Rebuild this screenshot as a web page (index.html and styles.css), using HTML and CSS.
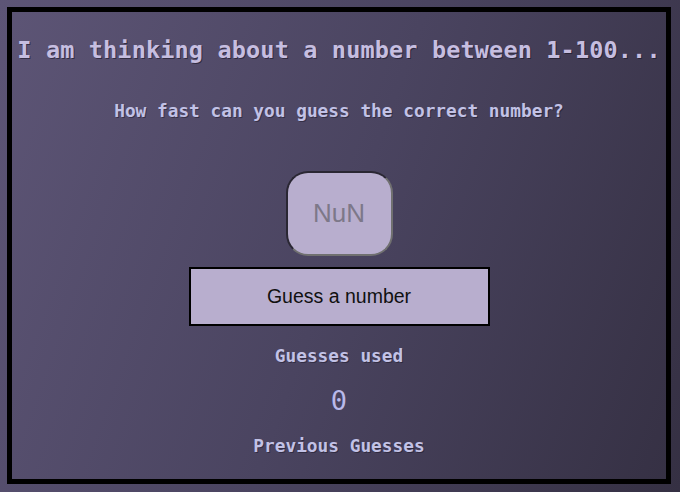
FILE: index.html
```html
<!DOCTYPE html>
<html lang="en">
<head>
<meta charset="utf-8">
<title>Guess the number</title>
<link rel="stylesheet" href="styles.css">
</head>
<body>
  <main class="game">
    <h1 class="title">I am thinking about a number between 1-100...</h1>
    <p class="subtitle">How fast can you guess the correct number?</p>
    <div class="display">NuN</div>
    <button class="guess-btn" type="button">Guess a number</button>
    <p class="label">Guesses used</p>
    <p class="count">0</p>
    <p class="label label-prev">Previous Guesses</p>
  </main>
</body>
</html>
```
FILE: styles.css
```css
html {
  height: 100%;
}
body {
  margin: 0;
  padding: 7px;
  height: 100%;
  box-sizing: border-box;
  background: linear-gradient(110deg, #5d5576 0%, #4a4460 50%, #353043 100%);
  font-family: "DejaVu Sans Mono", "Liberation Mono", monospace;
  color: #c5bde0;
}
.game {
  box-sizing: border-box;
  width: 664px;
  height: 477px;
  border: 5px solid #000;
  display: flex;
  flex-direction: column;
  align-items: center;
  padding-top: 24px;
}
.title {
  margin: 0;
  font-size: 23.5px;
  line-height: 28px;
  letter-spacing: 0.15px;
  font-weight: bold;
  white-space: nowrap;
  color: #c6bee0;
  text-shadow: 1px 1px 0 rgba(20, 16, 30, 0.55);
}
.subtitle {
  margin: 36px 0 0;
  font-size: 17.8px;
  line-height: 22px;
  font-weight: bold;
  color: #c2c2e6;
  text-shadow: 1px 1px 0 rgba(20, 16, 30, 0.45);
}
.display {
  box-sizing: border-box;
  margin-top: 49px;
  width: 107px;
  height: 85px;
  border: 2px solid;
  border-color: #2a2733 #707070 #707070 #2a2733;
  border-radius: 22px;
  background: #b8aece;
  display: flex;
  align-items: center;
  justify-content: center;
  font-family: "Liberation Sans", Arial, sans-serif;
  font-size: 26px;
  color: #7d7889;
}
.guess-btn {
  box-sizing: border-box;
  margin-top: 11px;
  width: 301px;
  height: 59px;
  border: 2px solid #000;
  background: #b8aece;
  font-family: "Liberation Sans", Arial, sans-serif;
  font-size: 19.5px;
  color: #111;
  padding: 0;
}
.label {
  margin: 19px 0 0;
  font-size: 17.8px;
  line-height: 22px;
  font-weight: bold;
  color: #c2c2e6;
  text-shadow: 1px 1px 0 rgba(20, 16, 30, 0.45);
}
.count {
  margin: 19px 0 0;
  font-size: 27px;
  line-height: 30px;
  color: #b9b9ea;
}
.label-prev {
  margin-top: 19px;
}
```
